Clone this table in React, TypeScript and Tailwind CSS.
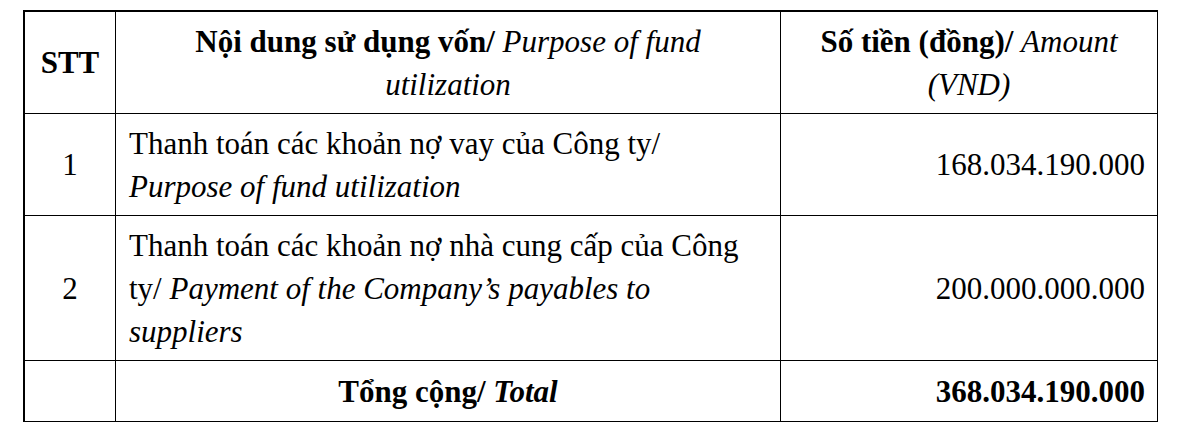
import React from "react";

const base =
  "border-r-[1.5px] border-b-[1.5px] border-black py-[7.5px] flex flex-col justify-center";

function Cell({
  className = "",
  children,
}: {
  className?: string;
  children?: React.ReactNode;
}) {
  return <div className={`${base} ${className}`}>{children}</div>;
}

export default function App() {
  return (
    <div className="w-[1200px] h-[432px] bg-white overflow-hidden text-black font-['Liberation_Serif',serif] text-[31px] leading-[43px]">
      <div className="pt-[10px] pl-[23px]">
        <div className="grid grid-cols-[91px_665px_377px] w-fit border-t-2 border-l-2 border-black">
          <Cell className="items-center font-bold">STT</Cell>
          <Cell className="items-center text-center whitespace-nowrap">
            <div>
              <span className="font-bold">Nội dung sử dụng vốn/</span>{" "}
              <span className="italic">Purpose of fund</span>
            </div>
            <div className="italic">utilization</div>
          </Cell>
          <Cell className="items-center text-center whitespace-nowrap border-r-2">
            <div>
              <span className="font-bold">Số tiền (đồng)/</span>{" "}
              <span className="italic">Amount</span>
            </div>
            <div className="italic">(VND)</div>
          </Cell>

          <Cell className="items-center">1</Cell>
          <Cell className="pl-[13px] whitespace-nowrap">
            <div>Thanh toán các khoản nợ vay của Công ty/</div>
            <div className="italic">Purpose of fund utilization</div>
          </Cell>
          <Cell className="items-end pr-[12px] border-r-2">168.034.190.000</Cell>

          <Cell className="items-center">2</Cell>
          <Cell className="pl-[13px] whitespace-nowrap">
            <div>Thanh toán các khoản nợ nhà cung cấp của Công</div>
            <div>
              ty/ <span className="italic">Payment of the Company’s payables to</span>
            </div>
            <div className="italic">suppliers</div>
          </Cell>
          <Cell className="items-end pr-[12px] border-r-2">200.000.000.000</Cell>

          <Cell className="border-b-2 py-[8.5px]">
            <span>&nbsp;</span>
          </Cell>
          <Cell className="items-center font-bold border-b-2 py-[8.5px]">
            <div>
              Tổng cộng/ <span className="italic">Total</span>
            </div>
          </Cell>
          <Cell className="items-end pr-[12px] font-bold border-r-2 border-b-2 py-[8.5px]">
            368.034.190.000
          </Cell>
        </div>
      </div>
    </div>
  );
}
